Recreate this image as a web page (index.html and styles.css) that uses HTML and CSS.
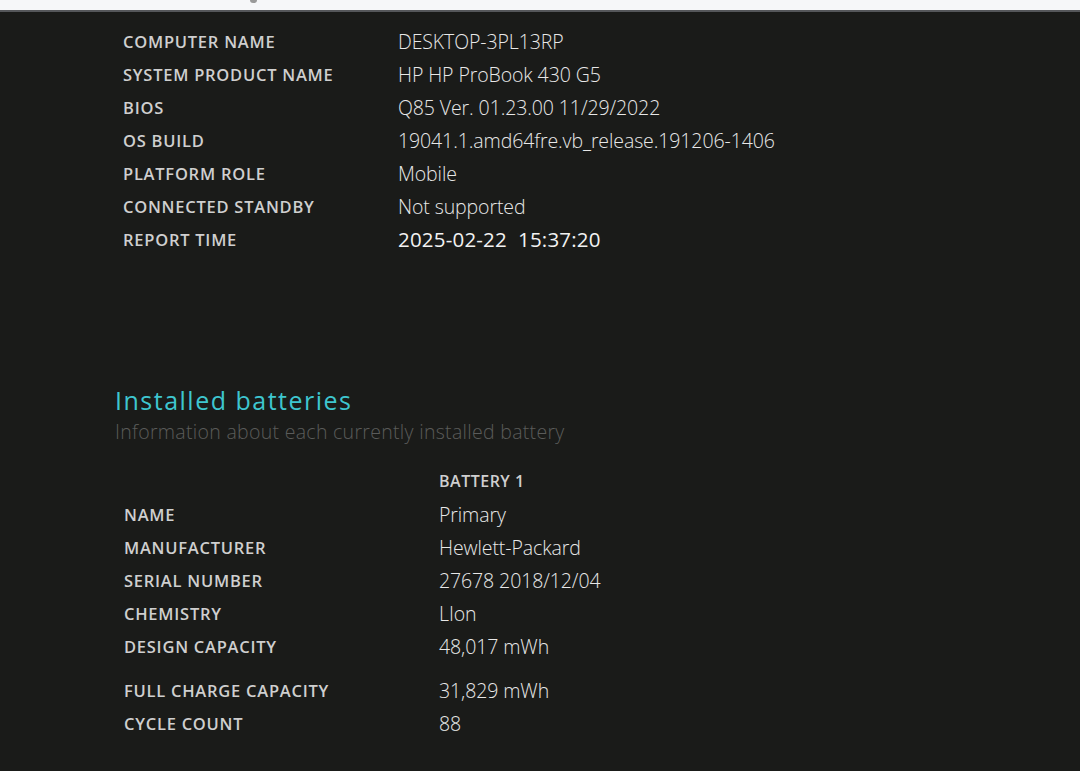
FILE: index.html
```html
<!DOCTYPE html>
<html lang="en">
  <head>
    <meta charset="UTF-8" />
    <meta name="viewport" content="width=device-width, initial-scale=1.0" />
    <title>Battery report</title>
    <link rel="stylesheet" href="styles.css">
  </head>
  <body>
    <div class="topbar"><span class="cut"></span></div>

    <div class="page">
      <table class="info">
        <tr><td class="label">Computer name</td><td class="value">DESKTOP-3PL13RP</td></tr>
        <tr><td class="label">System product name</td><td class="value">HP HP ProBook 430 G5</td></tr>
        <tr><td class="label">BIOS</td><td class="value">Q85 Ver. 01.23.00 11/29/2022</td></tr>
        <tr><td class="label">OS build</td><td class="value">19041.1.amd64fre.vb_release.191206-1406</td></tr>
        <tr><td class="label">Platform role</td><td class="value">Mobile</td></tr>
        <tr><td class="label">Connected standby</td><td class="value">Not supported</td></tr>
        <tr><td class="label">Report time</td><td class="value time">2025-02-22&nbsp; 15:37:20</td></tr>
      </table>

      <h2>Installed batteries</h2>
      <div class="sub">Information about each currently installed battery</div>

      <table class="info batteries">
        <tr><td class="label"></td><td class="head">Battery 1</td></tr>
        <tr><td class="label">Name</td><td class="value">Primary</td></tr>
        <tr><td class="label">Manufacturer</td><td class="value">Hewlett-Packard</td></tr>
        <tr><td class="label">Serial number</td><td class="value">27678 2018/12/04</td></tr>
        <tr><td class="label">Chemistry</td><td class="value">LIon</td></tr>
        <tr class="spaced"><td class="label">Design capacity</td><td class="value">48,017 mWh</td></tr>
        <tr><td class="label">Full charge capacity</td><td class="value">31,829 mWh</td></tr>
        <tr><td class="label">Cycle count</td><td class="value">88</td></tr>
      </table>
    </div>
  </body>
</html>
```

FILE: styles.css
```css
html, body {
  margin: 0;
  padding: 0;
  height: 100%;
}

body {
  background-color: #1a1b19;
  color: #e6e6e6;
  font-family: "Open Sans", "Noto Sans", sans-serif;
  overflow: hidden;
}

.topbar {
  height: 10px;
  background-color: #f6f7f9;
  border-bottom: 2px solid #55575a;
  position: relative;
}

/* tail of the heading scrolled away above */
.cut {
  position: absolute;
  left: 250px;
  top: 0;
  width: 7px;
  height: 3px;
  border-radius: 0 0 4px 4px;
  background-color: #9a9a9a;
}

.page {
  padding: 13px 0 0 115px;
}

.info {
  border-collapse: collapse;
  margin-left: 8px;
}

.info td {
  padding: 0;
  height: 33px;
  line-height: 33px;
  white-space: nowrap;
}

.label {
  width: 275px;
  font-size: 16.5px;
  font-weight: 600;
  letter-spacing: 0.75px;
  text-transform: uppercase;
  color: #cfcfcf;
}

.value {
  font-size: 19.5px;
  font-weight: 300;
  color: #e8e8e8;
  letter-spacing: -0.1px;
}

.time {
  font-size: 20.5px;
  font-weight: 400;
  letter-spacing: 0.2px;
  color: #f2f2f2;
}

h2 {
  margin: 129px 0 0 0;
  font-size: 25px;
  font-weight: 400;
  letter-spacing: 1.5px;
  color: #3ec6cf;
  line-height: 30px;
}

.sub {
  margin-top: 2px;
  font-size: 19.5px;
  font-weight: 300;
  letter-spacing: 0.3px;
  color: #5a5b5a;
  line-height: 30px;
}

.batteries {
  margin-top: 18px;
  margin-left: 9px;
}

.batteries td {
  height: 32.7px;
}

.batteries .label {
  width: 315px;
}

.head {
  font-size: 16px;
  font-weight: 600;
  letter-spacing: 0.5px;
  text-transform: uppercase;
  color: #cfcfcf;
}

.batteries tr.spaced td {
  height: 44px;
  line-height: 33px;
  vertical-align: top;
}
```
